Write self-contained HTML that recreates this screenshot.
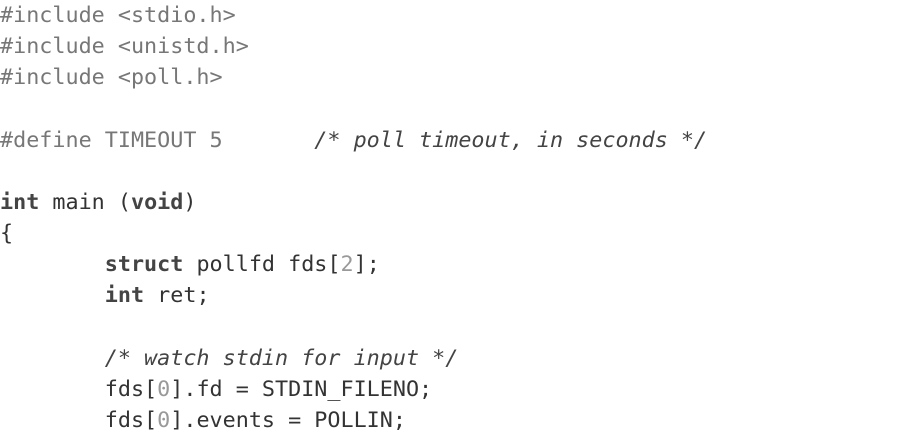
<!DOCTYPE html>
<html><head><meta charset="utf-8"><style>
html,body{margin:0;padding:0;background:#fff;width:897px;height:437px;overflow:hidden}
pre{margin:0;padding:0;position:absolute;left:0;top:0;font-family:"DejaVu Sans Mono","Liberation Mono",monospace;font-size:21.75px;line-height:31.15px;color:#333}
.p{color:#777}.c{font-style:italic;color:#444}.k{font-weight:bold;color:#444}.n{color:#999}
</style></head><body><pre><span class="p">#include &lt;stdio.h&gt;
#include &lt;unistd.h&gt;
#include &lt;poll.h&gt;

#define TIMEOUT 5</span>       <span class="c">/* poll timeout, in seconds */</span>

<span class="k">int</span> main (<span class="k">void</span>)
{
        <span class="k">struct</span> pollfd fds[<span class="n">2</span>];
        <span class="k">int</span> ret;

        <span class="c">/* watch stdin for input */</span>
        fds[<span class="n">0</span>].fd = STDIN_FILENO;
        fds[<span class="n">0</span>].events = POLLIN;
</pre></body></html>
